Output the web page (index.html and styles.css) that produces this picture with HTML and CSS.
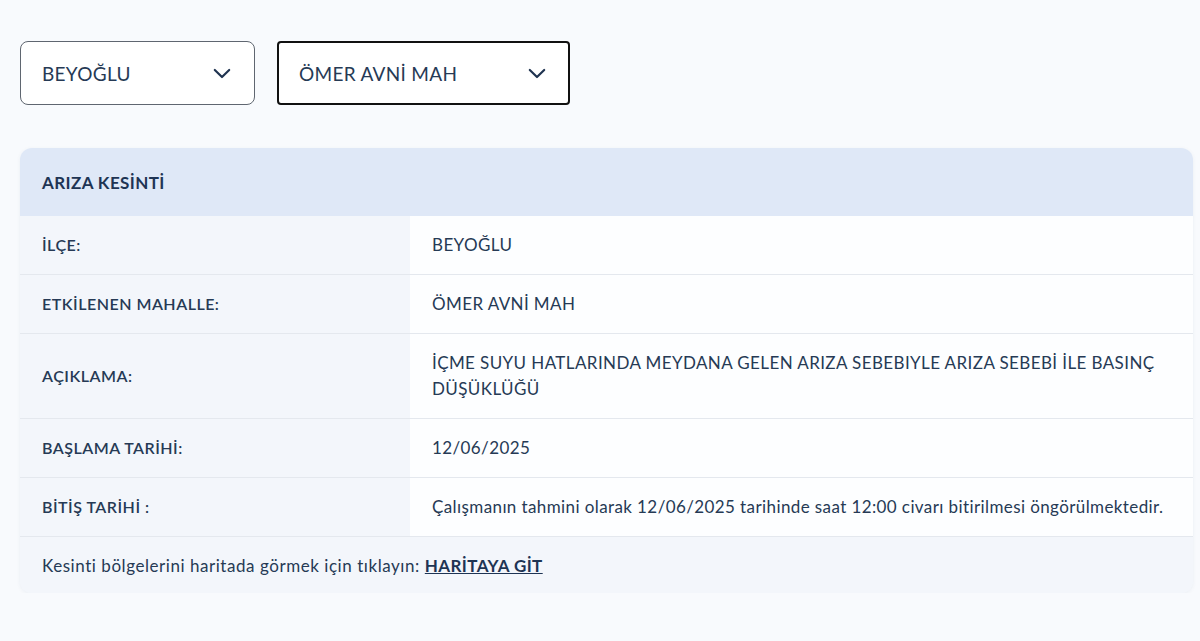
FILE: index.html
```html
<!DOCTYPE html>
<html lang="tr">
<head>
    <meta charset="UTF-8">
    <meta name="viewport" content="width=device-width, initial-scale=1.0">
    <title>Arıza Kesinti</title>
    <link rel="stylesheet" href="styles.css">
</head>
<body>
    <div class="page">
        <div class="filters">
            <div class="select district">
                <span>BEYOĞLU</span>
                <svg class="chevron" viewBox="0 0 20 12" width="18" height="11"><path d="M2 2l8 8 8-8" fill="none" stroke="#1f3350" stroke-width="2.4" stroke-linecap="round" stroke-linejoin="round"/></svg>
            </div>
            <div class="select quarter active">
                <span>ÖMER AVNİ MAH</span>
                <svg class="chevron" viewBox="0 0 20 12" width="18" height="11"><path d="M2 2l8 8 8-8" fill="none" stroke="#1f3350" stroke-width="2.4" stroke-linecap="round" stroke-linejoin="round"/></svg>
            </div>
        </div>

        <div class="card">
            <div class="card-header">ARIZA KESİNTİ</div>
            <div class="row">
                <div class="label">İLÇE:</div>
                <div class="value">BEYOĞLU</div>
            </div>
            <div class="row">
                <div class="label">ETKİLENEN MAHALLE:</div>
                <div class="value">ÖMER AVNİ MAH</div>
            </div>
            <div class="row">
                <div class="label">AÇIKLAMA:</div>
                <div class="value">İÇME SUYU HATLARINDA MEYDANA GELEN ARIZA SEBEBIYLE ARIZA SEBEBİ İLE BASINÇ DÜŞÜKLÜĞÜ</div>
            </div>
            <div class="row">
                <div class="label">BAŞLAMA TARİHİ:</div>
                <div class="value">12/06/2025</div>
            </div>
            <div class="row">
                <div class="label">BİTİŞ TARİHİ :</div>
                <div class="value">Çalışmanın tahmini olarak 12/06/2025 tarihinde saat 12:00 civarı bitirilmesi öngörülmektedir.</div>
            </div>
            <div class="card-footer">
                Kesinti bölgelerini haritada görmek için tıklayın: <a href="#" class="map-link">HARİTAYA GİT</a>
            </div>
        </div>
    </div>
</body>
</html>
```

FILE: styles.css
```css
body {
    margin: 0;
    font-family: Lato, "Noto Sans", sans-serif;
    background-color: #f8fafd;
    color: #263a55;
}
.page {
    padding: 41px 7px 0 20px;
}
.filters {
    display: flex;
    gap: 22px;
}
.select {
    box-sizing: border-box;
    height: 64px;
    display: flex;
    align-items: center;
    justify-content: space-between;
    padding: 0 23px 0 21px;
    background: #fff;
    border: 1px solid #5f6670;
    border-radius: 8px;
    font-size: 19px;
    letter-spacing: 0.3px;
    color: #263a55;
}
.district {
    width: 235px;
}
.quarter {
    width: 293px;
}
.select.active {
    border: 2px solid #111;
    border-radius: 4px;
    padding-left: 20px;
    padding-right: 22px;
}
.card {
    margin-top: 43px;
    border-radius: 12px;
    overflow: hidden;
    background: #f3f6fb;
    box-shadow: 0 1px 4px rgba(40, 60, 100, 0.06);
}
.card-header {
    height: 68px;
    display: flex;
    align-items: center;
    padding-left: 22px;
    background: #dfe8f7;
    font-size: 17px;
    letter-spacing: 0.4px;
    font-weight: 700;
    color: #1e3454;
}
.row {
    display: flex;
    border-bottom: 1px solid #e4e8ee;
    line-height: 26px;
}
.label {
    width: 368px;
    flex: none;
    padding: 16px 0 16px 22px;
    font-size: 16px;
    letter-spacing: 0.5px;
    font-weight: 600;
    display: flex;
    align-items: center;
    background: #f3f6fb;
}
.value {
    flex: 1;
    padding: 16px 28px 16px 22px;
    font-size: 17px;
    letter-spacing: 0.4px;
    background: #fdfeff;
}
.card-footer {
    height: 56px;
    display: flex;
    align-items: center;
    padding-left: 22px;
    font-size: 17px;
    letter-spacing: 0.55px;
    background: #f3f6fb;
}
.map-link {
    margin-left: 5px;
    color: #1e3454;
    font-weight: 700;
    letter-spacing: 0.4px;
    text-decoration: underline;
}
```
